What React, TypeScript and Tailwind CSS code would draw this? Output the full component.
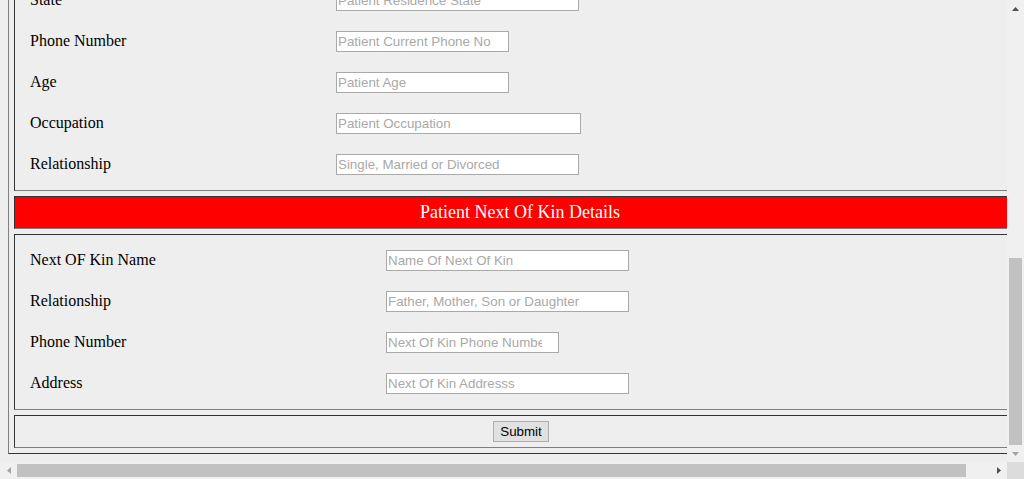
import React from "react";

type Row = { label: string; placeholder: string; w: string; pr?: string };

const patientRows: Row[] = [
  { label: "State", placeholder: "Patient Residence State", w: "w-[243px]" },
  { label: "Phone Number", placeholder: "Patient Current Phone No", w: "w-[173px]" },
  { label: "Age", placeholder: "Patient Age", w: "w-[173px]" },
  { label: "Occupation", placeholder: "Patient Occupation", w: "w-[245px]" },
  { label: "Relationship", placeholder: "Single, Married or Divorced", w: "w-[243px]" },
];

const kinRows: Row[] = [
  { label: "Next OF Kin Name", placeholder: "Name Of Next Of Kin", w: "w-[243px]" },
  { label: "Relationship", placeholder: "Father, Mother, Son or Daughter", w: "w-[243px]" },
  {
    label: "Phone Number",
    placeholder: "Next Of Kin Phone Number",
    w: "w-[173px]",
    pr: "pr-[16px]",
  },
  { label: "Address", placeholder: "Next Of Kin Addresss", w: "w-[243px]" },
];

const cellBorder =
  "border border-t-[#333333] border-l-[#333333] border-r-[#808080] border-b-[#808080]";

function FormRow({ row, labelW }: { row: Row; labelW: string }) {
  return (
    <div className="flex items-center h-[21px]">
      <div className={`${labelW} shrink-0 pl-[15px] pb-[2px] text-[16px] text-black whitespace-nowrap`}>
        {row.label}
      </div>
      <input
        type="text"
        placeholder={row.placeholder}
        className={`${row.w} ${row.pr ?? "pr-[2px]"} h-[21px] border border-[#a9a9a9] bg-white pl-[1px] text-[13.33px] font-['Liberation_Sans',Arial,sans-serif] placeholder:text-[#a9a9a9] outline-none`}
      />
    </div>
  );
}

function Arrow({ dir, color }: { dir: "up" | "down" | "left" | "right"; color: string }) {
  const horizontal = dir === "left" || dir === "right";
  const d = {
    up: "M3.5 0 L7 4 L0 4 Z",
    down: "M0 0 L7 0 L3.5 4 Z",
    left: "M4 0 L4 7 L0 3.5 Z",
    right: "M0 0 L4 3.5 L0 7 Z",
  }[dir];
  return (
    <svg width={horizontal ? 4 : 7} height={horizontal ? 7 : 4} viewBox={horizontal ? "0 0 4 7" : "0 0 7 4"}>
      <path d={d} fill={color} />
    </svg>
  );
}

export default function App() {
  return (
    <div className="w-[1024px] h-[479px] flex flex-col overflow-hidden bg-[#eeeeee] font-['Liberation_Serif','Times_New_Roman',serif]">
      <div className="flex flex-1 min-h-0">
        <div className="flex-1 min-w-0 overflow-hidden">
          <div className="mt-[-32px] ml-[8px] w-[1026px] p-[5px] flex flex-col gap-[5px] border border-t-[#808080] border-l-[#808080] border-r-[#333333] border-b-[#333333]">
            <div className={`${cellBorder} py-[15px] flex flex-col gap-[20px]`}>
              {patientRows.map((r) => (
                <FormRow key={r.placeholder} row={r} labelW="w-[321px]" />
              ))}
            </div>

            <div className={`${cellBorder} h-[33px] pr-[2px] bg-[#ff0000] flex items-center justify-center text-white text-[18px]`}>
              Patient Next Of Kin Details
            </div>

            <div className={`${cellBorder} py-[15px] flex flex-col gap-[20px]`}>
              {kinRows.map((r) => (
                <FormRow key={r.placeholder} row={r} labelW="w-[371px]" />
              ))}
            </div>

            <div className={`${cellBorder} h-[33px] flex items-center justify-center`}>
              <button className="h-[21px] px-[6px] border border-[#adadad] bg-[#e1e1e1] text-[13.33px] text-black font-['Liberation_Sans',Arial,sans-serif] leading-none">
                Submit
              </button>
            </div>
          </div>
        </div>

        <div className="w-[17px] shrink-0 bg-[#f0f0f0] flex flex-col">
          <div className="h-[17px] flex items-center justify-center">
            <Arrow dir="up" color="#505050" />
          </div>
          <div className="flex-1 flex flex-col justify-end items-center">
            <div className="w-[13px] h-[187px] bg-[#c1c1c1]" />
          </div>
          <div className="h-[17px] flex items-center justify-center">
            <Arrow dir="down" color="#a3a3a3" />
          </div>
        </div>
      </div>

      <div className="h-[17px] shrink-0 flex">
        <div className="flex-1 bg-[#f0f0f0] flex">
          <div className="w-[17px] flex items-center justify-center">
            <Arrow dir="left" color="#a3a3a3" />
          </div>
          <div className="flex-1 flex items-center">
            <div className="w-[949px] h-[13px] bg-[#c1c1c1]" />
          </div>
          <div className="w-[17px] flex items-center justify-center">
            <Arrow dir="right" color="#505050" />
          </div>
        </div>
        <div className="w-[17px] bg-[#dcdcdc]" />
      </div>
    </div>
  );
}
